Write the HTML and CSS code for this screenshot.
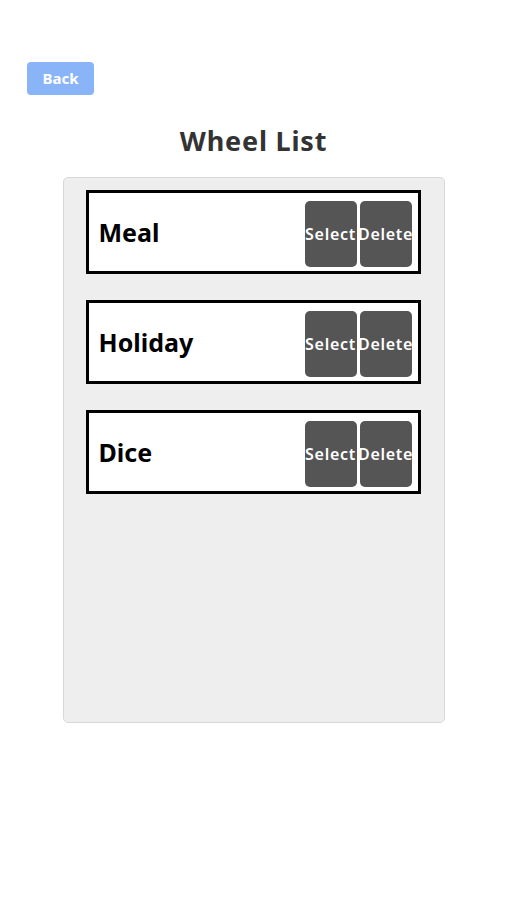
FILE: index.html
```html
<!DOCTYPE html>
<html lang="en">
<head>
<meta charset="utf-8">
<title>Wheel List</title>
<link rel="stylesheet" href="styles.css">
</head>
<body>
<div class="page">
  <div class="topbar">
    <button class="back-btn">Back</button>
  </div>
  <h1 class="title">Wheel List</h1>
  <div class="panel">
    <div class="item">
      <span class="item-name">Meal</span>
      <div class="actions">
        <button class="act-btn">Select</button>
        <button class="act-btn">Delete</button>
      </div>
    </div>
    <div class="item">
      <span class="item-name">Holiday</span>
      <div class="actions">
        <button class="act-btn">Select</button>
        <button class="act-btn">Delete</button>
      </div>
    </div>
    <div class="item">
      <span class="item-name">Dice</span>
      <div class="actions">
        <button class="act-btn">Select</button>
        <button class="act-btn">Delete</button>
      </div>
    </div>
  </div>
</div>
</body>
</html>
```
FILE: styles.css
```css
* { box-sizing: border-box; }
html, body { margin: 0; padding: 0; background: #fff; }
body { font-family: "Noto Sans", "Noto Sans CJK JP", sans-serif; }
.page { display: flex; flex-direction: column; align-items: center; padding-top: 62px; }
.topbar { align-self: stretch; padding-left: 27px; }
.back-btn {
  width: 67px; height: 33px;
  background: #8ab4f8; color: #fff;
  border: none; border-radius: 4px;
  font-family: inherit; font-weight: 700; font-size: 15px;
  padding: 0; line-height: 1;
}
.title {
  margin: 24px 0 0; height: 44px; line-height: 44px;
  font-size: 27px; font-weight: 700; color: #333; letter-spacing: 0.8px;
}
.panel {
  margin-top: 14px; width: 382px; height: 546px;
  background: #eee; border: 1px solid #d8d8d8; border-radius: 5px;
  padding: 12px 23px 0 22px;
  display: flex; flex-direction: column; gap: 26px;
}
.item {
  height: 84px; border: 3px solid #000; background: #fff;
  display: flex; align-items: center; justify-content: space-between;
  padding: 0 6px 0 10px;
}
.item-name { font-size: 25px; font-weight: 700; color: #000; }
.actions { display: flex; gap: 3px; margin-top: 3px; }
.act-btn {
  width: 52px; height: 66px; padding: 0;
  background: #555; color: #fff; border: none; border-radius: 5px;
  font-family: inherit; font-size: 16px; font-weight: 600; letter-spacing: 0.7px;
  display: flex; align-items: center; justify-content: center;
  white-space: nowrap; overflow: visible;
}
```
